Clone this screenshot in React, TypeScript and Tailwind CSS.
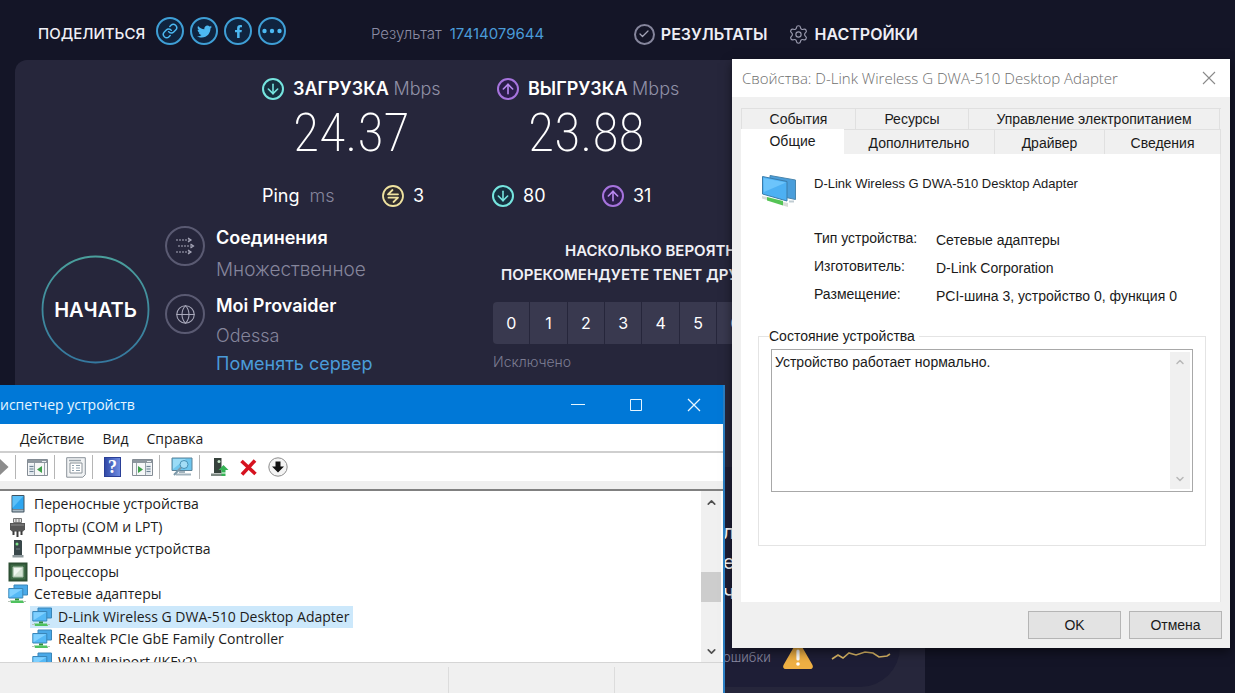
import type { ReactNode } from 'react';
import { ArrowDown, ArrowUp, Check, ChevronDown, ChevronUp, Globe, Link, Settings } from 'lucide-react';
import { FaFacebookF, FaTwitter } from 'react-icons/fa';

const scores = [0, 1, 2, 3, 4, 5, 6, 7, 8, 9, 10];

/* ---------- Icons ---------- */

function DownloadIcon() {
  return (
    <span className="flex size-[22px] shrink-0 items-center justify-center rounded-full border-2 border-[#76e5df] bg-[#15303f] text-[#76e5df]">
      <ArrowDown size={16} strokeWidth={2.4} />
    </span>
  );
}

function UploadIcon() {
  return (
    <span className="flex size-[22px] shrink-0 items-center justify-center rounded-full border-2 border-[#a673dd] bg-[#2b1d4a] text-[#b98af0]">
      <ArrowUp size={16} strokeWidth={2.4} />
    </span>
  );
}

function IdleIcon() {
  return (
    <svg className="size-[22px] shrink-0" viewBox="0 0 22 22" fill="none" stroke="#efe2a0" strokeWidth="1.8" strokeLinecap="round" strokeLinejoin="round">
      <circle cx="11" cy="11" r="10" fill="#2f2c2e" />
      <path d="M10.5 5 6 9.300h10M6.500 12.700H16L11.500 17" />
    </svg>
  );
}

function ConnectionsIcon() {
  return (
    <svg width="20" height="20" viewBox="0 0 20 20" fill="none" stroke="#a9a9bb" strokeWidth="1.2">
      <path d="M1 4h14M3 10h14M1 16h14" strokeDasharray="2 1" />
      <path d="m13 2 3 2-3 2M15.500 8l3 2-3 2M13 14l3 2-3 2" />
    </svg>
  );
}

function AdapterIcon({ size = 20 }: { size?: number }) {
  return (
    <svg className="shrink-0" width={size} height={size} viewBox="0 0 20 20">
      <path d="M6 1h13.500v10H6z" fill="#4aa9e8" stroke="#3a86b8" strokeWidth="1" />
      <path d="M.8 4.500h14v9.500H.8z" fill="#55b9f6" stroke="#3a86b8" strokeWidth="1" />
      <path d="M1.500 13.300V5.200h12.800z" fill="#7fd0ff" />
      <path d="M7 14.500h4v2H7z" fill="#2e8a3e" />
      <path d="M2 16.500h13l1 2.500H3z" fill="#4fc25e" />
      <path d="M0 17.500h3M15 17.500h3" stroke="#b9c4b9" />
    </svg>
  );
}

function LargeAdapterIcon() {
  return (
    <svg width="36" height="34" viewBox="0 0 36 34">
      <path d="M9 1.500 34.500 6v19.500L9 20z" fill="#4a9edb" stroke="#4a86ad" />
      <path d="M1.500 2.500 26 7.500v19.500L1.500 20z" fill="#4db0f3" stroke="#3a7cab" />
      <path d="M2.500 4 25 8.500 3 18z" fill="#6cc4fb" />
      <path d="m6 23 16 4v4.500L6 26.500z" fill="#55c455" />
      <path d="m1 22 5 1v3l-5-1.500zM22 28l5 1v4l-5-1.500z" fill="#d7dcd7" />
      <path d="M28 27.500h5" stroke="#c0ccd2" strokeWidth="2" />
    </svg>
  );
}

function PortableIcon() {
  return (
    <svg className="shrink-0" width="20" height="20" viewBox="0 0 20 20">
      <rect x="3.500" y="1" width="13" height="17.500" rx="1" fill="#3f5260" />
      <rect x="4.500" y="2" width="11" height="13" fill="#2ea6f0" />
      <path d="M4.500 2h11l-11 12z" fill="#5cc0f8" />
      <path d="M4.500 15.500h11v2h-11z" fill="#a8b8c2" />
    </svg>
  );
}

function PortIcon() {
  return (
    <svg className="shrink-0" width="20" height="20" viewBox="0 0 20 20">
      <path d="M5.500 1.500h8v4h-8z" fill="#e2e2e2" stroke="#777" />
      <path d="M8 2v4M11 2v4" stroke="#777" />
      <path d="M2 6h15v6.500l-2 2H4l-2-2z" fill="#565656" />
      <path d="M3 8h13" stroke="#8c8c8c" />
      <path d="M5.500 14v4M9.500 14v6M13.500 14v4" stroke="#3c3c3c" strokeWidth="2" />
    </svg>
  );
}

function SoftwareIcon() {
  return (
    <svg className="shrink-0" width="20" height="20" viewBox="0 0 20 20">
      <path d="M6 1h7l1 1v14H6z" fill="#39474a" />
      <path d="M4.500 16h11v2.500h-11z" fill="#8d989b" />
      <circle cx="9" cy="5" r="1.500" fill="#7fe08b" />
      <path d="M8 10h4" stroke="#6e7c80" />
    </svg>
  );
}

function CpuIcon() {
  return (
    <svg className="shrink-0" width="20" height="20" viewBox="0 0 20 20">
      <path d="M1.500 1.500h17v17h-17z" fill="#3f6b47" stroke="#2c4f33" strokeWidth="2" />
      <path d="M5 5h10v10H5z" fill="#d5e3d5" stroke="#a7bfa9" />
      <path d="M6 6h8l-8 8z" fill="#f2f7f2" />
    </svg>
  );
}

function PaneIcon({ flip = false }: { flip?: boolean }) {
  return (
    <svg width="21" height="18" viewBox="0 0 21 18">
      <path d="M.5 1.500h20v16H.5z" fill="#f6f7f8" stroke="#848c94" />
      <path d="M1 2h19v3H1z" fill="#8e979f" />
      <path d="M15 3.500h4" stroke="#e8ecef" />
      {flip ? (
        <>
          <path d="M14 6.500h5v10h-5z" fill="#dfe6ec" />
          <path d="M14.500 8.500h4M14.500 11h4M14.500 13.500h4" stroke="#6f8394" />
          <path d="m6 8 5 3.500L6 15z" fill="#3fa04a" />
          <path d="M13.500 5v12M4.500 5v12" stroke="#9aa3ab" />
        </>
      ) : (
        <>
          <path d="M2 6.500h5v10H2z" fill="#dfe6ec" />
          <path d="M2.500 8.500h4M2.500 11h4M2.500 13.500h4" stroke="#6f8394" />
          <path d="m15 8-5 3.500 5 3.500z" fill="#3fa04a" />
          <path d="M7.500 5v12M17.500 5v12" stroke="#9aa3ab" />
        </>
      )}
    </svg>
  );
}

function PropertiesIcon() {
  return (
    <svg width="20" height="21" viewBox="0 0 20 21" fill="none">
      <path d="M.7.7h18.600v17l-2.500 2.500H.7z" fill="#f1f3f4" stroke="#8a9299" />
      <path d="M4 6h12v10H4z" fill="#fff" stroke="#8a9299" />
      <path d="M3 3.500h12" stroke="#9aa3ab" strokeWidth="1.500" />
      <path d="M6 8.500h2M10 8.500h4M6 11h2M10 11h4M6 13.500h2M10 13.500h4" stroke="#8fa0ad" />
    </svg>
  );
}

function HelpIcon() {
  return (
    <span className="flex h-5 w-[17px] items-center justify-center border border-[#2a3f97] bg-linear-to-r from-[#324aa8] to-[#6f8be0] font-['Liberation_Serif',serif] text-[18px] leading-none font-bold text-white">
      ?
    </span>
  );
}

function ScanIcon() {
  return (
    <svg width="22" height="20" viewBox="0 0 22 20" fill="none">
      <path d="M1 1h20v12.500H1z" fill="#6ec6ee" stroke="#5d8398" />
      <path d="M2 2h13L2 12z" fill="#9adcf7" />
      <path d="M8 14h6v2H8zM5 16.500h15v2H5z" fill="#a2b3bd" />
      <circle cx="13" cy="7.500" r="4" fill="#b9e7fa" fillOpacity=".7" stroke="#4790b5" />
      <path d="m10 10.500-7 7.500" stroke="#7c98a8" strokeWidth="2" />
    </svg>
  );
}

function UpdateDriverIcon() {
  return (
    <svg width="18" height="20" viewBox="0 0 18 20">
      <path d="M3 1h7.500v15H3z" fill="#36423c" />
      <path d="M0 16.500h11V19H0z" fill="#7d8983" />
      <circle cx="8" cy="4.500" r="1.500" fill="#c8e8cc" />
      <path d="m12.500 8 5 5h-3v2.500h-4V13h-3zM10.500 16.500h4V19h-4z" fill="#35b254" />
    </svg>
  );
}

function UninstallIcon() {
  return (
    <svg width="17" height="17" viewBox="0 0 17 17" stroke="#d6121f" strokeWidth="3.600">
      <path d="m1.500 2 14 13M15 1.500 2 15.500" />
    </svg>
  );
}

function DisableIcon() {
  return (
    <svg width="20" height="20" viewBox="0 0 20 20">
      <circle cx="10" cy="10" r="9.200" fill="#f4f4f4" stroke="#8c8c8c" />
      <path d="M7.500 4.500h5v5H16l-6 6-6-6h3.500z" fill="#111" />
    </svg>
  );
}

function WarningIcon() {
  return (
    <svg width="32" height="30" viewBox="0 0 32 30">
      <path d="M16 2c1.500 0 2.400.8 3 2l11.500 20c1 2 0 4-2 4h-25c-2 0-3-2-2-4L13 4c.6-1.200 1.500-2 3-2z" fill="#efb044" />
      <path d="M16 10v8" stroke="#fff" strokeWidth="3.200" strokeLinecap="round" />
      <circle cx="16" cy="23" r="1.800" fill="#fff" />
    </svg>
  );
}

/* ---------- Speed test page ---------- */

function ShareButton({ label, children }: { label: string; children: ReactNode }) {
  return (
    <button aria-label={label} className="flex size-7 items-center justify-center rounded-full border-2 border-[#3f9fd6] bg-[#10243f] text-[#4cb9f2]">
      {children}
    </button>
  );
}

function SiteHeader() {
  return (
    <header className="flex h-[60px] items-start pt-[17px] pl-[38px] whitespace-nowrap">
      <span className="flex h-[34px] w-[118px] items-center text-[15px] font-medium text-[#f0f0f6]">ПОДЕЛИТЬСЯ</span>
      <div className="flex gap-1.5">
        <ShareButton label="Ссылка"><Link size={16} strokeWidth={2.2} /></ShareButton>
        <ShareButton label="Twitter"><FaTwitter size={15} /></ShareButton>
        <ShareButton label="Facebook"><FaFacebookF size={13} /></ShareButton>
        <ShareButton label="Ещё">
          <svg width="20" height="6" viewBox="0 0 20 6" fill="currentColor">
            <circle cx="2.500" cy="3" r="2.200" /><circle cx="10" cy="3" r="2.200" /><circle cx="17.500" cy="3" r="2.200" />
          </svg>
        </ShareButton>
      </div>
      <p className="ml-[85px] flex h-[34px] items-center gap-2 text-[15px] font-light text-[#8b8ba3]">
        Результат <a href="#result" className="font-normal text-[#4a9bd8]">17414079644</a>
      </p>
      <nav className="ml-auto flex gap-5 pr-[7px] text-base font-semibold text-[#eeeef5]">
        <a href="#results" className="flex h-[34px] items-center gap-1.5">
          <span className="flex size-[21px] items-center justify-center rounded-full border-2 border-[#85859c] text-[#a3a3b6]"><Check size={12} strokeWidth={2.5} /></span>
          РЕЗУЛЬТАТЫ
        </a>
        <a href="#settings" className="flex h-[34px] items-center gap-1.5">
          <Settings size={21} strokeWidth={1.3} className="text-[#9a9aae]" />
          НАСТРОЙКИ
        </a>
      </nav>
    </header>
  );
}

function Speed({ icon, title, value }: { icon: ReactNode; title: string; value: string }) {
  return (
    <div className="grid w-[235px] grid-cols-[22px_1fr] gap-x-[9px]">
      {icon}
      <h2 className="text-lg leading-[22px] font-semibold whitespace-nowrap text-white">
        {title} <span className="font-light text-[#9090a6]">Mbps</span>
      </h2>
      <p className="col-start-2 mt-1 text-[54px] leading-[58px] font-extralight text-white font-['Roboto_Condensed',Roboto,sans-serif]">{value}</p>
    </div>
  );
}

function PingRow() {
  return (
    <div className="mt-[23px] flex h-[22px] items-center text-lg text-white">
      <div className="flex w-[120px] gap-2.5">Ping <span className="font-light text-[#85859c]">ms</span></div>
      <div className="flex w-[110px] items-center gap-[9px]"><IdleIcon />3</div>
      <div className="flex w-[110px] items-center gap-[9px]"><DownloadIcon />80</div>
      <div className="flex items-center gap-[9px]"><UploadIcon />31</div>
    </div>
  );
}

function SpeedTest() {
  return (
    <main className="ml-[15px] flex-1 rounded-tl-xl bg-[#26263b]">
      <section className="pt-[18px] pl-[247px]">
        <div className="flex">
          <Speed icon={<DownloadIcon />} title="ЗАГРУЗКА" value="24.37" />
          <Speed icon={<UploadIcon />} title="ВЫГРУЗКА" value="23.88" />
        </div>
        <PingRow />
      </section>

      <div className="mt-[19px] flex">
        <section className="flex w-[478px] pl-[26px]">
          <button className="relative mt-[29px] flex size-[109px] items-center justify-center text-xl font-semibold text-white">
            <svg className="absolute inset-0 size-full" viewBox="0 0 109 109" fill="none">
              <defs>
                <linearGradient id="ring" x1="0" y1="0" x2="0" y2="1">
                  <stop offset="0" stopColor="#4a9f9c" />
                  <stop offset="1" stopColor="#35789f" />
                </linearGradient>
              </defs>
              <circle cx="54.500" cy="54.500" r="53" stroke="url(#ring)" strokeWidth="1.800" />
            </svg>
            НАЧАТЬ
          </button>
          <div className="ml-[15px] flex flex-col gap-7">
            <span className="flex size-10 items-center justify-center rounded-full border-2 border-[#5a5a72]"><ConnectionsIcon /></span>
            <span className="flex size-10 items-center justify-center rounded-full border-2 border-[#5a5a72] text-[#a9a9bb]"><Globe size={21} strokeWidth={1.2} /></span>
          </div>
          <div className="ml-[11px] text-lg font-light whitespace-nowrap text-[#85859b]">
            <h3 className="leading-6 font-semibold text-white">Соединения</h3>
            <p className="mt-1.5 text-[19px] leading-7">Множественное</p>
            <h3 className="mt-2.5 leading-6 font-semibold text-white">Moi Provaider</h3>
            <p className="mt-1.5 leading-6">Odessa</p>
            <a href="#servers" className="mt-1 block leading-6 font-normal text-[#4a9bd8]">Поменять сервер</a>
          </div>
        </section>

        <section className="w-[410px] pt-[13px] whitespace-nowrap">
          <h3 className="text-[15px] leading-6 font-semibold text-[#f0f0f6]">
            <span className="block pl-[72px]">НАСКОЛЬКО ВЕРОЯТНО</span>
            <span className="block pl-2">ПОРЕКОМЕНДУЕТЕ TENET ДРУЗЬЯМ</span>
          </h3>
          <div className="mt-[15px] grid h-[42px] grid-cols-11 gap-px overflow-hidden rounded-sm bg-[#26263b]">
            {scores.map((score) => (
              <button key={score} className="bg-[#39394f] text-base text-white">{score}</button>
            ))}
          </div>
          <p className="mt-2 text-sm leading-5 font-light text-[#7c7c92]">Исключено</p>
          <aside className="mt-[95px] mr-[3px] h-[220px] rounded-[40px] bg-[#1e1e36] pt-[50px] pl-[230px] text-white">
            <p className="text-xl leading-[30px]">л</p>
            <p className="text-xl leading-[30px]">е</p>
            <p className="text-xl leading-[30px]">ч</p>
            <div className="mt-[34px] flex gap-[11px] text-[13px] leading-8 font-light text-[#8b8ba3]">
              ошибки
              <WarningIcon />
              <svg className="mt-2 ml-1.5" width="60" height="20" viewBox="0 0 60 20" fill="none" stroke="#dcb866" strokeWidth="1.600">
                <path d="M1 10 7 6l5 3 6-5 7 2 9-3 8 1 6 4 8-1 3-2" />
              </svg>
            </div>
          </aside>
        </section>
      </div>
    </main>
  );
}

/* ---------- Device manager window ---------- */

const toolbar: { label: string; icon: ReactNode; width: string; divider?: boolean }[] = [
  { label: 'Вперёд', width: 'w-[9px]', icon: <svg width="10" height="20" viewBox="0 0 10 20"><path d="M0 1 9.500 10 0 19z" fill="#8c8c8c" /></svg>, divider: true },
  { label: 'Дерево консоли', width: 'w-[21px]', icon: <PaneIcon />, divider: true },
  { label: 'Свойства', width: 'w-[20px]', icon: <PropertiesIcon />, divider: true },
  { label: 'Справка', width: 'w-[17px]', icon: <HelpIcon /> },
  { label: 'Панель действий', width: 'w-[21px]', icon: <PaneIcon flip />, divider: true },
  { label: 'Обновить конфигурацию', width: 'w-[22px]', icon: <ScanIcon />, divider: true },
  { label: 'Обновить драйвер', width: 'w-[18px]', icon: <UpdateDriverIcon /> },
  { label: 'Удалить устройство', width: 'w-[17px]', icon: <UninstallIcon /> },
  { label: 'Отключить устройство', width: 'w-[20px]', icon: <DisableIcon /> },
];

const devices: { name: string; icon: ReactNode; child?: boolean; selected?: boolean }[] = [
  { name: 'Переносные устройства', icon: <PortableIcon /> },
  { name: 'Порты (COM и LPT)', icon: <PortIcon /> },
  { name: 'Программные устройства', icon: <SoftwareIcon /> },
  { name: 'Процессоры', icon: <CpuIcon /> },
  { name: 'Сетевые адаптеры', icon: <AdapterIcon /> },
  { name: 'D-Link Wireless G DWA-510 Desktop Adapter', icon: <AdapterIcon />, child: true, selected: true },
  { name: 'Realtek PCIe GbE Family Controller', icon: <AdapterIcon />, child: true },
  { name: 'WAN Miniport (IKEv2)', icon: <AdapterIcon />, child: true },
];

function DeviceManager() {
  return (
    <section className="absolute top-[385px] bottom-0 left-0 flex w-[725px] flex-col border-r-2 border-[#2b7fc4] bg-white text-sm text-[#1c1c1c] font-['Open_Sans',sans-serif]">
      <div className="flex h-[39px] shrink-0 items-center bg-[#0078d7] text-[#e6f6ff]">
        <h2 className="mr-auto">испетчер устройств</h2>
        <button aria-label="Свернуть" className="flex h-full w-[58px] items-center justify-center">
          <svg width="14" height="14" stroke="currentColor"><path d="M0 6.500h14" /></svg>
        </button>
        <button aria-label="Развернуть" className="flex h-full w-[58px] items-center justify-center">
          <svg width="14" height="14" stroke="currentColor" fill="none"><path d="M1.500 1.500h11v11h-11z" /></svg>
        </button>
        <button aria-label="Закрыть" className="flex h-full w-[58px] items-center justify-center">
          <svg width="14" height="14" stroke="currentColor" strokeWidth="1.300"><path d="m1 1 12 12M13 1 1 13" /></svg>
        </button>
      </div>

      <div className="flex h-[29px] shrink-0 items-center gap-[18px] border-b-2 border-[#cfcfcf] pt-0.5 pl-5">
        <button>Действие</button>
        <button>Вид</button>
        <button>Справка</button>
      </div>

      <div className="flex h-[28px] shrink-0 items-center">
        {toolbar.map((item) => (
          <div key={item.label} className="flex items-center">
            <button aria-label={item.label} className={`flex items-center justify-center ${item.width}`}>{item.icon}</button>
            {item.divider ? <span className="mr-[11px] ml-[6px] h-6 w-px bg-[#b5b5b5]" /> : <span className="w-[11px]" />}
          </div>
        ))}
      </div>
      <div className="h-[10px] shrink-0 border-b-2 border-[#808080] bg-[#efefef]" />

      <div className="flex h-[171px] shrink-0 pr-0.5">
        <ul className="grid h-[182px] flex-1 grid-rows-8 self-start pt-0.5 pl-2 [clip-path:inset(0_0_11px_0)]">
          {devices.map((device) => (
            <li key={device.name} className={device.child ? 'flex pl-[22px]' : 'flex'}>
              <span className={`flex items-center gap-[6px] pr-1 whitespace-nowrap ${device.child ? 'pl-0.5' : ''} ${device.selected ? 'bg-[#cce8fb]' : ''}`}>
                {device.icon}
                {device.name}
              </span>
            </li>
          ))}
        </ul>
        <div className="flex w-5 flex-col items-center bg-[#f0f0f0] text-[#505050]">
          <ChevronUp size={13} strokeWidth={3} className="mt-[5px]" />
          <span className="mt-[63px] h-[30px] w-full bg-[#cdcdcd]" />
          <ChevronDown size={13} strokeWidth={3} className="mt-auto mb-1" />
        </div>
      </div>

      <div className="grid flex-1 grid-cols-[449px_166px_1fr] border-t border-[#d5d5d5] bg-[#f0f0f0] pt-1">
        <span className="border-r border-[#dcdcdc]" />
        <span className="border-r border-[#dcdcdc]" />
      </div>
    </section>
  );
}

/* ---------- Adapter properties dialog ---------- */

const properties = [
  ['Тип устройства:', 'Сетевые адаптеры'],
  ['Изготовитель:', 'D-Link Corporation'],
  ['Размещение:', 'PCI-шина 3, устройство 0, функция 0'],
];

function AdapterDialog() {
  return (
    <section role="dialog" aria-labelledby="dialog-title" className="absolute top-[59px] left-[732px] w-[498px] bg-[#f0f0f0] pb-[9px] text-sm leading-5 text-[#1a1a1a] shadow-[0_4px_10px_rgba(0,0,0,0.5)] font-['Liberation_Sans',sans-serif]">
      <div className="flex h-[38px] items-center justify-between bg-white pr-3.5 pl-2.5">
        <h2 id="dialog-title" className="text-[15px] font-light text-[#6e6e6e] font-['Open_Sans',sans-serif]">
          Свойства: D-Link Wireless G DWA-510 Desktop Adapter
        </h2>
        <button aria-label="Закрыть">
          <svg width="14" height="14" stroke="#8a8a8a" strokeWidth="1.100"><path d="m1 1 12 12M13 1 1 13" /></svg>
        </button>
      </div>

      <div className="px-[9px] pt-[11px]">
        <div role="tablist">
          <div className="grid h-[21px] grid-cols-[114px_113px_1fr] border-t border-l border-[#e0e0e0] pr-px">
            <button role="tab" className="border-r border-[#e0e0e0]">События</button>
            <button role="tab" className="border-r border-[#e0e0e0]">Ресурсы</button>
            <button role="tab" className="border-r border-[#e0e0e0]">Управление электропитанием</button>
          </div>
          <div className="grid h-[25px] grid-cols-[103px_151px_110px_1fr]">
            <button role="tab" aria-selected="true" className="bg-white pb-0.5">Общие</button>
            <button role="tab" className="border-t border-r border-[#e0e0e0] pt-0.5">Дополнительно</button>
            <button role="tab" className="border-t border-r border-[#e0e0e0] pt-0.5">Драйвер</button>
            <button role="tab" className="border-t border-r border-[#e0e0e0] pt-0.5">Сведения</button>
          </div>
        </div>

        <div role="tabpanel" className="h-[448px] border-r border-[#e6e6e6] bg-white pt-5 pr-3.5 pl-[17px]">
          <div className="flex gap-[17px] pl-[3px]">
            <LargeAdapterIcon />
            <h3 className="text-[13px]">D-Link Wireless G DWA-510 Desktop Adapter</h3>
          </div>
          <dl className="mt-5 grid grid-cols-[122px_1fr] gap-y-1.5 pl-14 whitespace-nowrap">
            {properties.map(([name, value]) => (
              <div key={name} className="col-span-2 grid grid-cols-subgrid">
                <dt>{name}</dt>
                <dd className="pt-0.5">{value}</dd>
              </div>
            ))}
          </dl>
          <fieldset className="mt-5 h-[220px] border border-[#e4e4e4] px-3">
            <legend className="-ml-0.5 px-0 pr-1 leading-5"><label htmlFor="device-status">Состояние устройства</label></legend>
            <div className="mt-[3px] flex h-[143px] border border-[#a8a8a8] p-0.5">
              <textarea id="device-status" readOnly className="flex-1 resize-none overflow-hidden pl-px leading-5 outline-none" value="Устройство работает нормально." />
              <div className="flex w-5 flex-col items-center justify-between bg-[#f0f0f0] py-1 text-[#b8b8b8]">
                <ChevronUp size={12} strokeWidth={3} />
                <ChevronDown size={12} strokeWidth={3} />
              </div>
            </div>
          </fieldset>
        </div>
      </div>

      <div className="flex justify-end gap-2 pt-[9px] pr-2">
        <button className="h-[28px] w-[93px] border border-[#b5b5b5] bg-[#e3e3e3]">OK</button>
        <button className="h-[28px] w-[93px] border border-[#b5b5b5] bg-[#e3e3e3]">Отмена</button>
      </div>
    </section>
  );
}

export default function App() {
  return (
    <div className="relative h-screen overflow-hidden bg-[#141527] font-['Inter',sans-serif]">
      <div className="flex h-full max-w-[925px] flex-col">
        <SiteHeader />
        <SpeedTest />
      </div>
      <DeviceManager />
      <AdapterDialog />
    </div>
  );
}
